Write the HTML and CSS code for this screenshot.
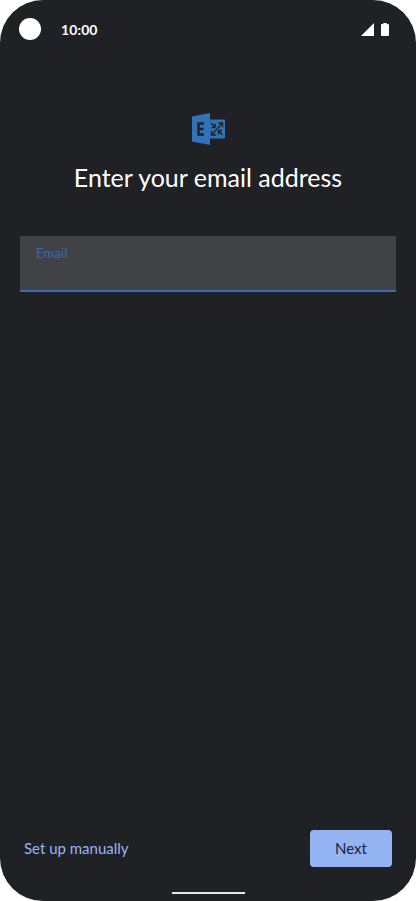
FILE: index.html
```html
<!DOCTYPE html>
<html lang="en">
<head>
    <meta charset="UTF-8">
    <meta name="viewport" content="width=device-width, initial-scale=1.0">
    <title>Enter your email address</title>
    <link rel="stylesheet" href="styles.css">
</head>
<body>
    <div class="phone">
        <div class="status-bar">
            <span class="camera"></span>
            <span class="clock">10:00</span>
            <svg class="signal" width="13" height="13" viewBox="0 0 13 13"><path d="M13 0v13H0z" fill="#fff"/></svg>
            <svg class="battery" width="8" height="13" viewBox="0 0 8 13"><path d="M2.200 0h3.600v1H7a1 1 0 0 1 1 1v10a1 1 0 0 1-1 1H1a1 1 0 0 1-1-1V2a1 1 0 0 1 1-1h1.200z" fill="#fff"/></svg>
        </div>

        <div class="header">
            <svg class="logo" width="34" height="32" viewBox="0 0 34 32">
                <path d="M1 3.500L19 0v32L1 28.500z" fill="#3173b9"/>
                <path d="M19 6.500h14a1 1 0 0 1 1 1v17a1 1 0 0 1-1 1H19z" fill="#3173b9"/>
                <path d="M13 10.500H7.500v11H13M7.500 16h5" fill="none" stroke="#202125" stroke-width="2.400"/>
                <g fill="none" stroke="#202125" stroke-width="1.300">
                    <path d="M20 10l4 4.500M20.500 14.500H24V10.500M31.500 10l-11 12M27 10h4.500v4.500M31.500 22l-4-4.500M31 17.500h-3.500v4M20.500 17.500V22H25"/>
                </g>
            </svg>
            <h1>Enter your email address</h1>
        </div>

        <label class="field">
            <span>Email</span>
            <input type="email">
        </label>

        <div class="actions">
            <a class="manual">Set up manually</a>
            <button>Next</button>
        </div>
        <div class="nav-bar"></div>
    </div>
</body>
</html>
```
FILE: styles.css
```css
* {
    box-sizing: border-box;
}

body {
    margin: 0;
    background-color: #fff;
    font-family: Lato, "Open Sans", sans-serif;
}

.phone {
    display: flex;
    flex-direction: column;
    height: 901px;
    background-color: #202125;
    border-radius: 43px;
    overflow: hidden;
}

.status-bar {
    display: flex;
    align-items: center;
    height: 58px;
    padding: 0 27px 0 19px;
}

.camera {
    width: 22px;
    height: 22px;
    border-radius: 50%;
    background-color: #fff;
}

.clock {
    margin-left: 20px;
    margin-right: auto;
    color: #fff;
    font-size: 14px;
    font-weight: bold;
    letter-spacing: 0.1px;
}

.battery {
    margin-left: 7px;
}

.header {
    display: flex;
    flex-direction: column;
    align-items: center;
    padding-top: 55px;
}

h1 {
    margin: 17px 0 0;
    color: #fff;
    font-size: 25px;
    font-weight: normal;
    line-height: 30px;
    white-space: nowrap;
}

.field {
    display: flex;
    flex-direction: column;
    height: 56px;
    margin: 44px 20px 0;
    padding: 9px 16px 0;
    background-color: #414245;
    border-bottom: 2px solid #3c68b8;
}

.field span {
    color: #3d66b0;
    font-size: 13px;
    line-height: 16px;
    letter-spacing: 0.2px;
}

.field input {
    height: 26px;
    padding: 0;
    background: none;
    border: none;
    outline: none;
    color: #fff;
    font: inherit;
}

.actions {
    display: flex;
    align-items: center;
    justify-content: space-between;
    margin-top: auto;
    padding: 0 24px 25px;
}

.manual {
    padding-bottom: 2px;
    color: #98b5f3;
    font-size: 15px;
}

button {
    width: 82px;
    height: 37px;
    padding: 0 0 2px;
    background-color: #94b3f3;
    border: none;
    border-radius: 4px;
    color: #17233d;
    font-family: inherit;
    font-size: 15px;
}

.nav-bar {
    width: 73px;
    height: 2px;
    margin: 0 auto 7px;
    background-color: #e4e6e7;
}
```
